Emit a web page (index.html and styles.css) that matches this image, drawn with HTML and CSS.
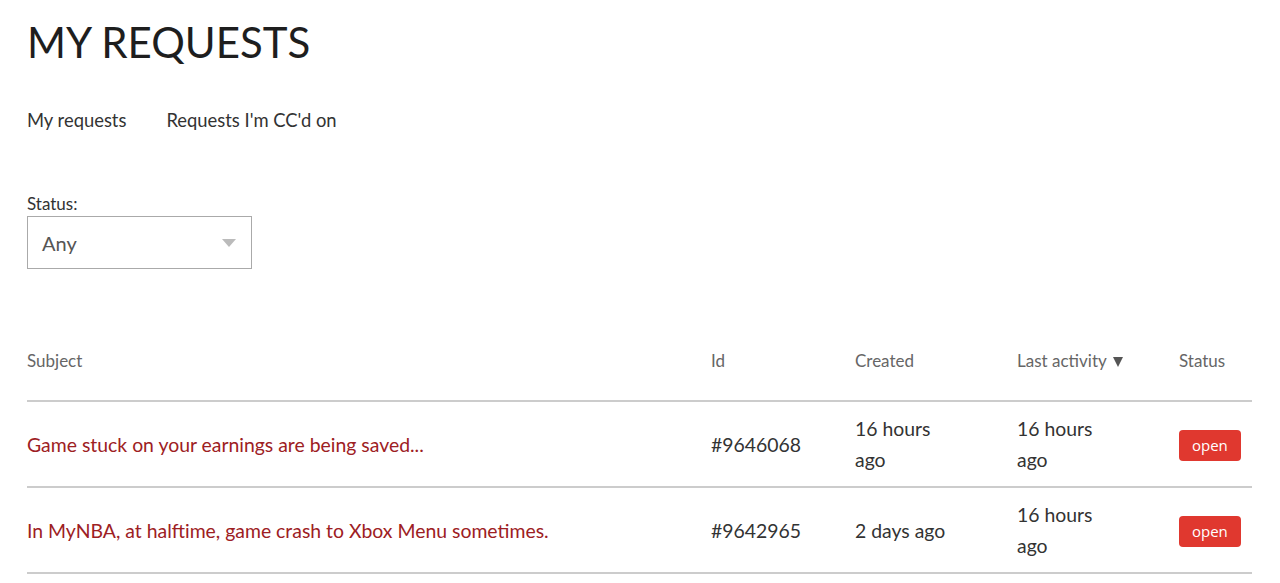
FILE: index.html
```html
<!DOCTYPE html>
<html lang="en">
<head>
    <meta charset="UTF-8">
    <meta name="viewport" content="width=device-width, initial-scale=1.0">
    <title>My Requests</title>
    <link rel="stylesheet" href="styles.css">
</head>
<body>
    <div class="container">
        <h1 class="page-title">MY REQUESTS</h1>

        <nav class="request-nav">
            <a href="#" class="nav-link">My requests</a>
            <a href="#" class="nav-link">Requests I'm CC'd on</a>
        </nav>

        <div class="filter">
            <label class="filter-label" for="status-filter">Status:</label>
            <div class="select-box" id="status-filter">
                <span class="select-value">Any</span>
                <span class="select-arrow"></span>
            </div>
        </div>

        <table class="requests-table">
            <thead>
                <tr>
                    <th class="col-subject">Subject</th>
                    <th class="col-id">Id</th>
                    <th class="col-created">Created</th>
                    <th class="col-activity">Last activity <span class="sort-arrow"></span></th>
                    <th class="col-status">Status</th>
                </tr>
            </thead>
            <tbody>
                <tr>
                    <td><a href="#" class="subject-link">Game stuck on your earnings are being saved...</a></td>
                    <td>#9646068</td>
                    <td class="date-cell">16 hours ago</td>
                    <td class="date-cell">16 hours ago</td>
                    <td><span class="status-badge">open</span></td>
                </tr>
                <tr>
                    <td><a href="#" class="subject-link">In MyNBA, at halftime, game crash to Xbox Menu sometimes.</a></td>
                    <td>#9642965</td>
                    <td class="date-cell">2 days ago</td>
                    <td class="date-cell">16 hours ago</td>
                    <td><span class="status-badge">open</span></td>
                </tr>
            </tbody>
        </table>
    </div>
</body>
</html>
```

FILE: styles.css
```css
* {
    box-sizing: border-box;
}

body {
    margin: 0;
    padding: 0;
    background-color: #fff;
    color: #333;
    font-family: 'Lato', 'Liberation Sans', sans-serif;
}

.container {
    padding: 0 28px 0 27px;
}

.page-title {
    margin: 13px 0 0;
    font-size: 42px;
    font-weight: 400;
    line-height: 58px;
    color: #1e1e1e;
}

.request-nav {
    display: flex;
    gap: 40px;
    margin-top: 36px;
}

.nav-link {
    font-size: 18.4px;
    line-height: 27px;
    color: #333;
    text-decoration: none;
}

.filter {
    margin-top: 57px;
}

.filter-label {
    display: block;
    font-size: 17px;
    line-height: 25px;
    color: #333;
}

.select-box {
    display: flex;
    align-items: center;
    justify-content: space-between;
    width: 225px;
    height: 53px;
    padding: 0 15px 0 14px;
    border: 1px solid #aaa;
    background-color: #fff;
}

.select-value {
    font-size: 20px;
    color: #555;
}

.select-arrow {
    width: 0;
    height: 0;
    border-left: 7px solid transparent;
    border-right: 7px solid transparent;
    border-top: 8px solid #bbb;
}

.requests-table {
    width: 100%;
    margin-top: 59px;
    border-collapse: collapse;
}

.requests-table th {
    padding: 21px 0 27px;
    font-size: 17px;
    font-weight: 400;
    line-height: 24px;
    color: #666;
    text-align: left;
    border-bottom: 2px solid #ccc;
}

.sort-arrow {
    display: inline-block;
    width: 0;
    height: 0;
    margin-left: 2px;
    border-left: 5px solid transparent;
    border-right: 5px solid transparent;
    border-top: 10px solid #555;
}

.col-subject { width: 684px; }
.col-id { width: 144px; }
.col-created { width: 162px; }
.col-activity { width: 162px; }

.requests-table td {
    padding: 11px 40px 11px 0;
    font-size: 19.4px;
    line-height: 31px;
    color: #333;
    vertical-align: middle;
    border-bottom: 2px solid #ccc;
}

.requests-table td.date-cell {
    padding-right: 56px;
}

.requests-table td:last-child {
    padding-right: 0;
}

.subject-link {
    color: #9d2023;
    text-decoration: none;
}

.status-badge {
    display: inline-block;
    padding: 0 13px;
    height: 31px;
    line-height: 31px;
    font-family: 'Open Sans', 'Liberation Sans', sans-serif;
    font-size: 15px;
    color: #fff;
    background-color: #e0382f;
    border-radius: 4px;
}
```
